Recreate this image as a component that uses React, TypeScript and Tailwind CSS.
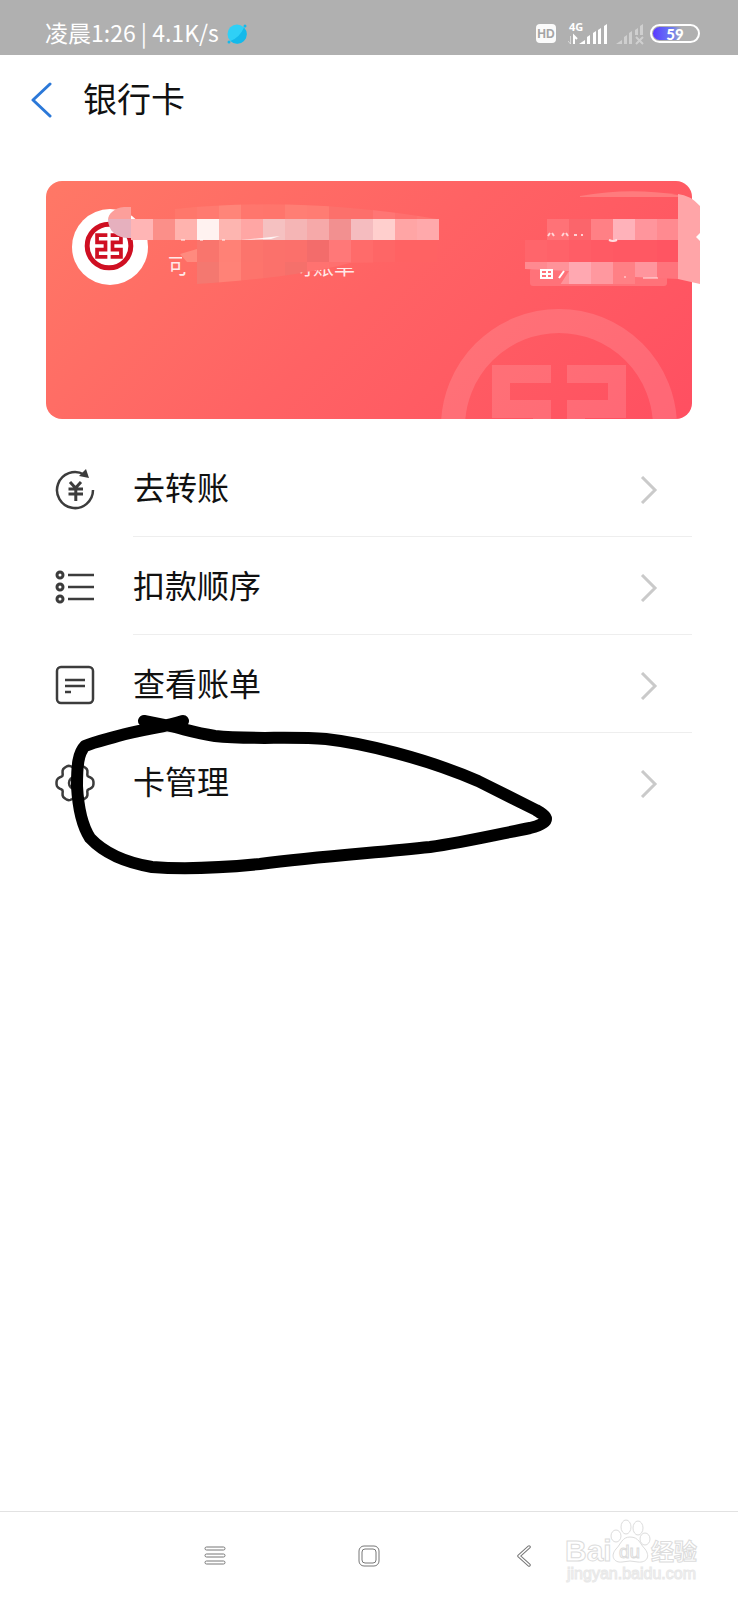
import type { ReactNode } from 'react';

interface Cell {
  x: number;
  y: number;
  w: number;
  h: number;
  fill: string;
}

const row = (x: number, y: number, h: number, fills: string[]): Cell[] =>
  fills.map((fill, i) => ({ x: x + i * 22, y, w: 22, h, fill }));

const leftCells: Cell[] = [
  ...row(131, 219, 21, [
    '#ffb5b5', '#fb8f89', '#ffb3ae', '#fff2f0', '#fdb5b0', '#ffa6a4', '#f5c1c1',
    '#f5b5b5', '#f6a9a9', '#f29090', '#f5bcbf', '#ffcfcd', '#ffa5a5', '#ffa9ab',
  ]),
];

const leftFadedCells: Cell[] = [
  ...row(175, 204, 15, [
    '#ff776b', '#ff7a70', '#ff8579', '#ff766d', '#ff756c', '#ff7e74', '#ff7c73',
    '#fc706b', '#fd6f6b', '#ff7674', '#ff6f6e', '#ff7370', '#ff6c6a', '#ff6767',
  ]),
  ...row(175, 240, 22, [
    '#ff8a7e', '#f9756d', '#ff8176', '#fc746c', '#fb716b', '#fb706b', '#f36c6b',
    '#ff7878', '#ff6b6a', '#fe6666', '#ff6263', '#ff6263', '#ff6164',
  ]),
  ...row(197, 262, 22, ['#f47870', '#ff8277', '#fd746c', '#fb716b', '#f5706b', '#ff7270', '#ff706f', '#ff6a69']),
];

const rightCells: Cell[] = [
  ...row(547, 219, 21, ['#ff7277', '#fb656b', '#ff8085', '#ffb2ba', '#ff959c', '#ff8a90']),
  ...row(525, 240, 22, ['#ff656b', '#ff6269', '#ff5d66', '#ff5a64', '#ff5863', '#ff5863', '#ff5562']),
];

const rightFadedCells: Cell[] = [
  ...row(525, 262, 22, ['#ff8a90', '#ff9399', '#ffa8b1', '#ff989f', '#ff8085', '#ff959d', '#ff747c']),
];

const Cells = ({ cells }: { cells: Cell[] }) => (
  <>
    {cells.map((c, i) => (
      <rect key={i} x={c.x} y={c.y} width={c.w} height={c.h} fill={c.fill} shapeRendering="crispEdges" />
    ))}
  </>
);

const BankMark = () => (
  <g fill="none" stroke="currentColor">
    <circle r="106" strokeWidth="24" />
    <path d="M-8 -53H-58V-18H-17V18H-58V53H-8" strokeWidth="18" />
    <path d="M8 -53H58V-18H17V18H58V53H8" strokeWidth="18" />
  </g>
);

const BankCard = () => (
  <section
    aria-label="银行卡"
    className="mx-[46px] mt-[41px] rounded-2xl bg-linear-135 from-[#ff7866] via-[#ff6264] to-[#ff4f61]"
  >
    <svg viewBox="46 181 646 238" className="block h-auto w-full overflow-visible">
      <defs>
        <clipPath id="card">
          <rect x="46" y="181" width="646" height="238" rx="16" />
        </clipPath>
        <clipPath id="brush-left">
          <path d="M175 209Q300 196 437 219V262L350 263C300 276 250 280 197 284V262H187L180 254L197 249V240H175Z" />
        </clipPath>
        <clipPath id="brush-right">
          <path d="M525 262H678V279L635 277V285H560L569 271L525 269Z" />
        </clipPath>
        <clipPath id="text-first">
          <path d="M166 252H188V257H182V272H186V278H166Z" />
        </clipPath>
        <clipPath id="text-rest">
          <path d="M298 273L334 268H360V280H298Z" />
        </clipPath>
      </defs>

      <g clipPath="url(#card)" className="text-white/13">
        <g transform="translate(559 427)">
          <BankMark />
        </g>
      </g>

      <circle cx="110" cy="247" r="38" fill="#fff" />
      <g transform="translate(109 246) scale(.206)" className="text-[#cf0f22]">
        <BankMark />
      </g>

      <g clipPath="url(#brush-left)">
        <Cells cells={leftFadedCells} />
      </g>
      <path d="M131 207H124C114 208 108 214 108 220H131Z" fill="#fc9f9b" />
      <path d="M108 219H131V238C118 239 108 232 108 219Z" fill="#e6b0be" />
      <Cells cells={leftCells} />
      <path d="M262 238L280 236L271 239L240 240Z" fill="#fff" opacity=".8" />
      <path d="M181 240h4M200 240h3M222 240h3" stroke="#fff" strokeWidth="1" />
      <g fill="#fff" opacity=".85" fontSize="21" fontFamily="'Noto Sans CJK SC', sans-serif">
        <text x="168" y="273" clipPath="url(#text-first)">可</text>
        <text x="292" y="274" clipPath="url(#text-rest)">对账单</text>
      </g>

      <path d="M580 196Q630 187 678 195V197H580Z" fill="#ff7b7d" />
      <Cells cells={rightCells} />
      <rect x="530" y="268" width="137" height="18" rx="3" fill="#ff7279" />
      <g clipPath="url(#brush-right)">
        <Cells cells={rightFadedCells} />
      </g>
      <path d="M678 194Q690 195 700 206V233L696 237L700 241V284L678 279Z" fill="#ffa5a8" />
      <g fill="none" stroke="#fff">
        <path d="M548 236l2-3m2 0l2 3M562 236l2-3m2 0l2 3M574 235h3M581 235h2" strokeWidth="2" opacity=".7" />
        <path d="M609 240q4 2 8 0" strokeWidth="2" opacity=".8" />
        <path d="M541 270h11v8h-11zM541 274h11M547 270v8M559 278l5-7" strokeWidth="2" />
        <path d="M643 278h15M624 277h2" strokeWidth="1" opacity=".8" />
      </g>
    </svg>
  </section>
);

const gearPoints = Array.from({ length: 72 }, (_, i) => {
  const angle = (i * Math.PI) / 36;
  const r = 17 + 2 * Math.cos(6 * angle) - 0.5 * Math.cos(12 * angle);
  return `${(20 + r * Math.cos(angle)).toFixed(2)},${(20 + r * Math.sin(angle)).toFixed(2)}`;
}).join(' ');

interface MenuItem {
  label: string;
  icon: ReactNode;
}

const menuItems: MenuItem[] = [
  {
    label: '去转账',
    icon: (
      <>
        <path d="M29 4.500A18 18 0 1 0 38 20" />
        <path d="M31 -1L34 8L24 6Z" fill="currentColor" stroke="none" />
        <path d="M15 12L20.500 18L26 12M13.500 19H28M13.500 24H28M20.800 18V31" strokeWidth="3" />
      </>
    ),
  },
  {
    label: '扣款顺序',
    icon: (
      <>
        <circle cx="5" cy="7" r="3" strokeWidth="3" />
        <circle cx="5" cy="19" r="3" strokeWidth="3" />
        <circle cx="5" cy="31" r="3" strokeWidth="3" />
        <path d="M13 7H39M13 19H39M13 31H39" />
      </>
    ),
  },
  {
    label: '查看账单',
    icon: (
      <>
        <rect x="2" y="1" width="36" height="36" rx="4" />
        <path d="M10 14H30M10 20H30M10 26H16" />
      </>
    ),
  },
  {
    label: '卡管理',
    icon: (
      <g transform="translate(0 -1)">
        <polygon points={gearPoints} />
        <circle cx="20" cy="20" r="6" />
      </g>
    ),
  },
];

const StatusBar = () => (
  <div className="flex h-[55px] items-center justify-between bg-[#b0b0b0] pt-3 pr-[38px] pl-[45px] text-white">
    <div className="flex items-center gap-2 text-[23px] leading-6">
      <span className="pb-1">凌晨1:26 | 4.1K/s</span>
      <svg viewBox="0 0 20 20" className="size-5">
        <circle cx="10" cy="10" r="9.500" fill="#2fd0f6" />
        <path d="M17 3.500A9.500 9.500 0 0 1 3.500 17Q13 13 17 3.500Z" fill="#14b9ea" />
        <circle cx="18" cy="2" r="1.500" fill="#14b9ea" />
        <circle cx="2" cy="18" r="1.500" fill="#14b9ea" />
      </svg>
    </div>
    <div className="flex items-center">
      <span className="flex h-[19px] w-5 items-center justify-center rounded bg-white/95 font-['Liberation_Sans'] text-xs font-bold text-[#a4a4a4]">
        HD
      </span>
      <svg viewBox="568 16 76 34" className="ml-3 h-[34px] w-[76px]">
        <text x="569" y="30" fontSize="11" fontWeight="700" fill="#fff" fontFamily="'Noto Sans', sans-serif">
          4G
        </text>
        <path d="M574 43V35L577 38" fill="none" stroke="#fff" strokeWidth="2" />
        <path d="M570.500 35V43L568 40" fill="none" stroke="#fff" strokeOpacity=".5" strokeWidth="1" />
        <path
          d="M579 43L585 39V43ZM587 43V36L590 34V43ZM593 43V32L596 30V43ZM598 43V29L601 27V43ZM604 43V25L607 23V43Z"
          fill="#fff"
        />
        <g fill="#fff" opacity=".4">
          <path d="M616 43L622 39V43ZM624 43V36L627 34V43ZM629 43V32L632 30V43ZM635 34V29L638 27V34ZM640 34V25L643 23V34Z" />
          <path d="M636 36L643 43M643 36L636 43" stroke="#fff" strokeWidth="2" />
        </g>
      </svg>
      <div className="ml-[6px] flex h-[19px] w-[50px] rounded-full border-2 border-white p-px">
        <div className="flex w-full items-center justify-center rounded-full bg-linear-to-r from-[#5a35ff] via-[#6d7cf0] via-45% to-transparent to-65% font-['Lato'] text-[15px] leading-4 font-black">
          59
        </div>
      </div>
    </div>
  </div>
);

const Circled = () => (
  <svg
    viewBox="60 700 500 190"
    className="pointer-events-none absolute top-[262px] left-[60px] h-[190px] w-[500px]"
    fill="none"
    stroke="#000"
    strokeWidth="12"
    strokeLinecap="round"
    strokeLinejoin="round"
  >
    <path d="M183 720C166 726 142 728 118 735C104 739 94 741 85 745C78 752 77 765 77 785C78 804 81 823 90 837C105 853 128 862 152 866C190 869 230 866 260 863C320 855 375 852 430 846C460 842 495 834 530 827C538 825 546 822 546 818C546 815 541 812 536 809L478 780C425 757 362 742 326 738C290 735 250 739 215 735C195 732 184 728 170 725L144 720" />
  </svg>
);

const Watermark = () => (
  <svg
    viewBox="560 1515 145 75"
    className="pointer-events-none absolute right-[33px] bottom-[10px] h-[75px] w-[145px]"
    fill="#fff"
    stroke="#dcdcdc"
    strokeWidth="1"
    fontFamily="'Liberation Sans', 'Noto Sans CJK SC', sans-serif"
  >
    <text x="565" y="1561" fontSize="30" fontWeight="700">Bai</text>
    <path d="M630 1537C639 1537 640 1544 645 1549C651 1557 646 1563 638 1562Q630 1560 622 1562C614 1563 610 1556 616 1549C621 1544 622 1537 630 1537Z" />
    <ellipse cx="616" cy="1536" rx="5" ry="6" />
    <ellipse cx="626" cy="1527" rx="5" ry="7" />
    <ellipse cx="638" cy="1528" rx="5" ry="7" />
    <ellipse cx="645" cy="1539" rx="5" ry="6" />
    <text x="619" y="1558" fontSize="19">du</text>
    <text x="651" y="1560" fontSize="23" fontWeight="700" fontFamily="'Noto Sans CJK SC', sans-serif">经验</text>
    <text x="567" y="1579" fontSize="16" fill="#fafafa" stroke="#e8e8e8">jingyan.baidu.com</text>
  </svg>
);

const App = () => {
  return (
    <div className="flex min-h-screen flex-col bg-white font-['Noto_Sans_CJK_SC',sans-serif] text-[#111]">
      <StatusBar />

      <header className="flex h-[85px] items-center gap-[31px] pl-[30px]">
        <button type="button" aria-label="返回">
          <svg viewBox="0 0 22 36" className="mt-1 h-9 w-[22px]" fill="none" stroke="#2b78d8" strokeWidth="3" strokeLinecap="round" strokeLinejoin="round">
            <path d="M20 2L3 18L20 34" />
          </svg>
        </button>
        <h1 className="text-[34px] leading-10">银行卡</h1>
      </header>

      <main className="flex-1">
        <BankCard />
        <div className="relative mt-5">
          <ul>
            {menuItems.map((item) => (
              <li key={item.label} className="group">
                <a href="#" className="flex items-center gap-[38px] pr-[46px] pl-[55px]">
                  <svg viewBox="0 0 40 40" className="mt-1 size-10 overflow-visible text-[#3c3c3c]" fill="none" stroke="currentColor" strokeWidth="2.500">
                    {item.icon}
                  </svg>
                  <span className="flex h-[98px] flex-1 items-center justify-between border-b border-[#eee] pr-[34px] group-last:border-transparent">
                    <span className="pb-1 text-[32px] leading-10">{item.label}</span>
                    <svg viewBox="0 0 18 28" className="mt-1 h-7 w-[18px]" fill="none" stroke="#cacaca" strokeWidth="3">
                      <path d="M2 1L15 14L2 27" />
                    </svg>
                  </span>
                </a>
              </li>
            ))}
          </ul>
          <Circled />
        </div>
      </main>

      <footer className="relative border-t border-[#e2e2e2]">
        <div className="flex h-[88px] items-center justify-center gap-[132px]">
          <button type="button" aria-label="菜单">
            <svg viewBox="0 0 22 22" className="size-[22px]" fill="#fff" stroke="#777" strokeWidth="1">
              <rect x="1" y="2" width="20" height="3" rx="1.500" />
              <rect x="1" y="9" width="20" height="3" rx="1.500" />
              <rect x="1" y="16" width="20" height="3" rx="1.500" />
            </svg>
          </button>
          <button type="button" aria-label="主页">
            <svg viewBox="0 0 22 22" className="size-[22px]" fill="none" stroke="#777" strokeWidth="1">
              <rect x="1" y="1" width="20" height="20" rx="5" />
              <rect x="4" y="4" width="14" height="14" rx="3" />
            </svg>
          </button>
          <button type="button" aria-label="后退">
            <svg viewBox="0 0 22 22" className="size-[22px]" strokeLinecap="round" strokeLinejoin="round" fill="none">
              <path d="M17 2L7 11L17 20" stroke="#777" strokeWidth="3.500" />
              <path d="M17 2L7 11L17 20" stroke="#fff" strokeWidth="1.500" />
            </svg>
          </button>
        </div>
        <Watermark />
      </footer>
    </div>
  );
};

export default App;
